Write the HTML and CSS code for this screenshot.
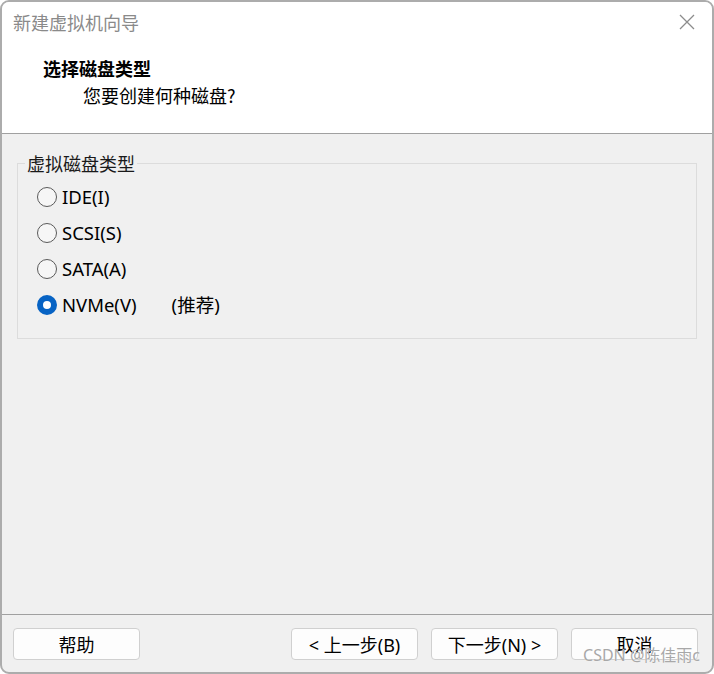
FILE: index.html
```html
<!DOCTYPE html>
<html lang="zh-CN">
<head>
  <meta charset="UTF-8" />
  <title>新建虚拟机向导</title>
  <link rel="stylesheet" href="styles.css">
</head>
<body>
  <div class="window">
    <div class="header">
      <div class="titlebar">
        <span class="title">新建虚拟机向导</span>
        <svg class="close" width="16" height="16" viewBox="0 0 16 16">
          <path d="M1 1 L15 15 M15 1 L1 15" stroke="#8c8c8c" stroke-width="1.3" fill="none" />
        </svg>
      </div>
      <div class="heading">选择磁盘类型</div>
      <div class="subheading">您要创建何种磁盘?</div>
    </div>

    <div class="content">
      <fieldset class="group">
        <legend>虚拟磁盘类型</legend>
        <div class="options">
          <div class="option"><span class="radio"></span>IDE(I)</div>
          <div class="option"><span class="radio"></span>SCSI(S)</div>
          <div class="option"><span class="radio"></span>SATA(A)</div>
          <div class="option"><span class="radio checked"></span>NVMe(V)<span class="hint">(推荐)</span></div>
        </div>
      </fieldset>
    </div>

    <div class="footer">
      <button class="btn">帮助</button>
      <div class="spacer"></div>
      <button class="btn">&lt; 上一步(B)</button>
      <button class="btn">下一步(N) &gt;</button>
      <button class="btn">取消</button>
      <span class="watermark">CSDN @陈佳雨c</span>
    </div>
  </div>
</body>
</html>
```

FILE: styles.css
```css
html, body {
  margin: 0;
  padding: 0;
  background: #ffffff;
}
body {
  font-family: "Noto Sans", "Noto Sans CJK SC", sans-serif;
  font-size: 18px;
  color: #000;
}
.window {
  width: 714px;
  height: 674px;
  box-sizing: border-box;
  border: 2px solid #acacac;
  border-radius: 9px;
  overflow: hidden;
  display: flex;
  flex-direction: column;
  background: #f0f0f0;
}
.header {
  background: #fff;
  height: 131px;
  border-bottom: 1px solid #a0a0a0;
  flex-shrink: 0;
}
.titlebar {
  height: 40px;
  display: flex;
  align-items: center;
  justify-content: space-between;
  padding: 0 17px 0 11px;
}
.title {
  color: #8a8a8a;
  font-size: 18px;
  font-family: "Noto Sans CJK SC", sans-serif;
}
.heading {
  margin: 16px 0 0 41px;
  line-height: 20px;
  font-weight: bold;
  font-size: 18px;
  font-family: "Noto Sans CJK SC", sans-serif;
}
.subheading {
  margin: 7px 0 0 81px;
  line-height: 20px;
  font-size: 18px;
  font-family: "Noto Sans CJK SC", sans-serif;
}
.content {
  flex: 1;
  padding: 19px 15px 0 15px;
}
.group {
  margin: 0;
  border: 1px solid #dcdcdc;
  padding: 0;
  height: 186px;
  box-sizing: border-box;
}
.group legend {
  padding: 0 2px;
  margin-left: 7px;
  line-height: 20px;
  color: #1a1a1a;
  font-family: "Noto Sans CJK SC", sans-serif;
}
.options {
  padding: 6px 0 0 19px;
}
.option {
  display: flex;
  align-items: center;
  height: 36px;
  line-height: 36px;
  font-size: 18.5px;
}
.radio {
  width: 20px;
  height: 20px;
  box-sizing: border-box;
  border: 1.5px solid #5a5a5a;
  border-radius: 50%;
  background: #f6f6f6;
  margin-right: 5px;
  flex-shrink: 0;
}
.radio.checked {
  border: 6px solid #0763c4;
  background: #fff;
}
.hint {
  margin-left: 35px;
}
.footer {
  position: relative;
  height: 58px;
  flex-shrink: 0;
  border-top: 1px solid #a0a0a0;
  display: flex;
  align-items: flex-start;
  gap: 13px;
  padding: 13px 14px 0 11px;
  box-sizing: border-box;
}
.spacer {
  flex: 1;
}
.btn {
  width: 127px;
  height: 32px;
  background: #fdfdfd;
  border: 1px solid #d0d0d0;
  border-radius: 4px;
  font-family: "Noto Sans", "Noto Sans CJK SC", sans-serif;
  font-size: 18px;
  color: #000;
  padding: 0;
}
.watermark {
  position: absolute;
  right: 12px;
  bottom: 6px;
  font-size: 16px;
  color: #a8a8a8;
  text-shadow: 0 0 1px #fff;
  font-family: "Noto Sans", "Noto Sans CJK SC", sans-serif;
}
```
